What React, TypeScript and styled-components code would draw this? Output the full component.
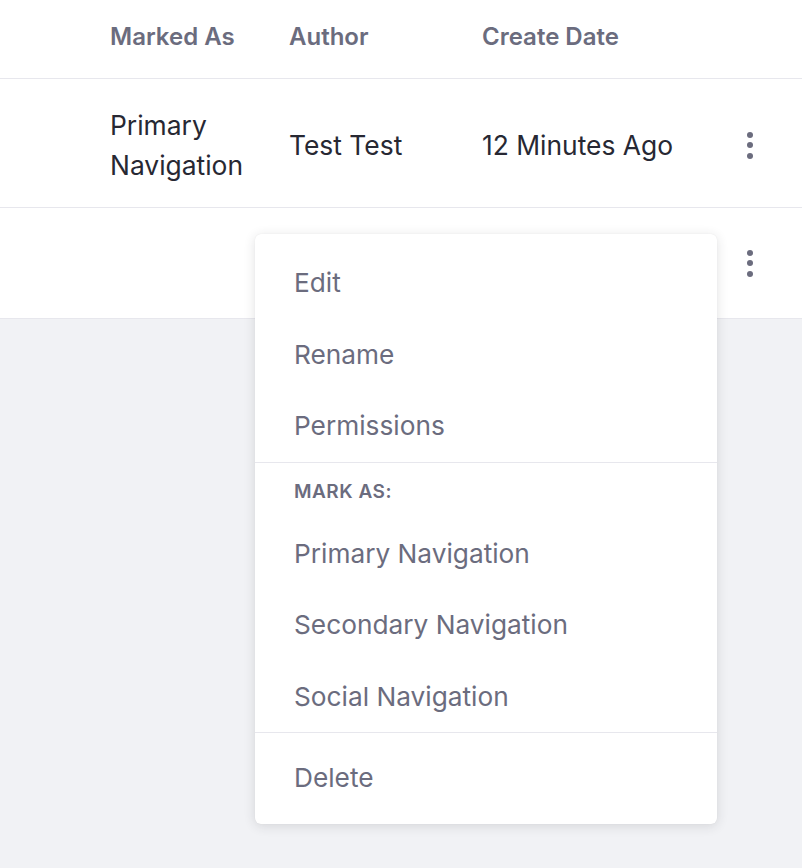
import React from 'react'
import styled, { createGlobalStyle } from 'styled-components'

const GlobalStyle = createGlobalStyle`
  html, body {
    margin: 0;
    padding: 0;
    background: #f1f2f5;
    font-family: Inter, "Open Sans", "Liberation Sans", sans-serif;
  }
`;

const Page = styled.div`
  position: relative;
  width: 802px;
  height: 868px;
  overflow: hidden;
`;

const Table = styled.div`
  background: #fff;
  display: flex;
  flex-direction: column;
`;

const Row = styled.div<{ $height: number; $shift?: number }>`
  display: grid;
  grid-template-columns: 110px 179px 193px 1fr 80px;
  padding-right: 12px;
  align-items: center;
  box-sizing: border-box;
  height: ${p => p.$height}px;
  padding-top: ${p => Math.max(p.$shift ?? 0, 0)}px;
  padding-bottom: ${p => Math.max(-(p.$shift ?? 0), 0)}px;
  border-bottom: 1px solid #e7e7ed;
`;

const HeadCell = styled.div`
  color: #6b6c7e;
  font-size: 24px;
  font-weight: 600;
`;

const Cell = styled.div`
  color: #272833;
  font-size: 26.4px;
  line-height: 40px;
`;

const Kebab = styled.button`
  justify-self: center;
  border: 0;
  background: none;
  padding: 0;
  display: flex;
  flex-direction: column;
  gap: 4.5px;
  span {
    width: 6px;
    height: 6px;
    border-radius: 50%;
    background: #6b6c7e;
  }
`;

const Menu = styled.div`
  position: absolute;
  left: 255px;
  top: 234px;
  width: 462px;
  padding: 13px 0 10px;
  background: #fff;
  border-radius: 6px;
  box-shadow: 0 2px 12px rgba(39, 40, 51, 0.14), 0 0 1px rgba(39, 40, 51, 0.1);
  display: flex;
  flex-direction: column;
`;

const Item = styled.div`
  height: 71.5px;
  display: flex;
  align-items: center;
  padding-left: 39px;
  color: #6b6c7e;
  font-size: 26.25px;
`;

const Divider = styled.div<{ $after?: number }>`
  height: 1px;
  background: #e7e7ed;
  margin-bottom: ${p => p.$after ?? 0}px;
`;

const Header = styled.div`
  padding: 17px 0 14px 39px;
  line-height: 24px;
  color: #6b6c7e;
  font-size: 19px;
  font-weight: 600;
  letter-spacing: 0.5px;
`;

const Dots = () => (
  <Kebab aria-label="Actions">
    <span />
    <span />
    <span />
  </Kebab>
);

export default function App() {
  return (
    <Page>
      <GlobalStyle />
      <Table>
        <Row $height={79} $shift={-6}>
          <div />
          <HeadCell>Marked As</HeadCell>
          <HeadCell>Author</HeadCell>
          <HeadCell>Create Date</HeadCell>
          <div />
        </Row>
        <Row $height={129} $shift={4}>
          <div />
          <Cell>Primary<br />Navigation</Cell>
          <Cell>Test Test</Cell>
          <Cell>12 Minutes Ago</Cell>
          <Dots />
        </Row>
        <Row $height={111}>
          <div />
          <div />
          <div />
          <div />
          <Dots />
        </Row>
      </Table>
      <Menu>
        <Item>Edit</Item>
        <Item>Rename</Item>
        <Item>Permissions</Item>
        <Divider />
        <Header>MARK AS:</Header>
        <Item>Primary Navigation</Item>
        <Item>Secondary Navigation</Item>
        <Item>Social Navigation</Item>
        <Divider $after={9} />
        <Item>Delete</Item>
      </Menu>
    </Page>
  )
}
